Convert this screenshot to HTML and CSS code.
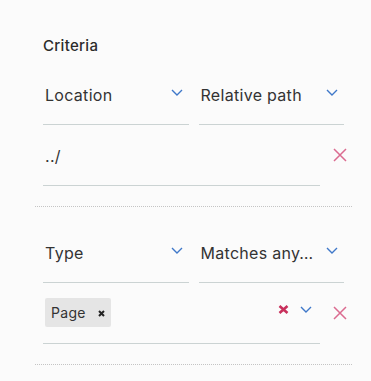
FILE: index.html
```html
<!DOCTYPE html>
<html>

<head>
    <link rel="stylesheet" href="styles.css">
    <title>Criteria</title>
</head>

<body>
    <div class="panel">
        <h3 class="title">Criteria</h3>

        <div class="group">
            <div class="selects">
                <div class="field select">
                    <span class="value">Location</span>
                    <svg class="chevron" width="12" height="7" viewBox="0 0 12 7"><polyline points="1,1 6,6 11,1" /></svg>
                </div>
                <div class="field select">
                    <span class="value">Relative path</span>
                    <svg class="chevron" width="12" height="7" viewBox="0 0 12 7"><polyline points="1,1 6,6 11,1" /></svg>
                </div>
            </div>
            <div class="inputrow">
                <div class="field input">
                    <span class="value">../</span>
                </div>
                <button class="remove">
                    <svg width="14" height="14" viewBox="0 0 14 14"><path d="M1 1 L13 13 M13 1 L1 13" /></svg>
                </button>
            </div>
        </div>

        <div class="group">
            <div class="selects">
                <div class="field select">
                    <span class="value">Type</span>
                    <svg class="chevron" width="12" height="7" viewBox="0 0 12 7"><polyline points="1,1 6,6 11,1" /></svg>
                </div>
                <div class="field select">
                    <span class="value">Matches any…</span>
                    <svg class="chevron" width="12" height="7" viewBox="0 0 12 7"><polyline points="1,1 6,6 11,1" /></svg>
                </div>
            </div>
            <div class="inputrow">
                <div class="field input multi">
                    <span class="chip">Page
                        <svg class="chip-x" width="7" height="7" viewBox="0 0 7 7"><path d="M1 1 L6 6 M6 1 L1 6" /></svg>
                    </span>
                    <span class="spacer"></span>
                    <svg class="clear" width="11" height="9" viewBox="0 0 11 9"><path d="M1.5 1 L9.5 8 M9.5 1 L1.5 8" /></svg>
                    <svg class="chevron" width="12" height="7" viewBox="0 0 12 7"><polyline points="1,1 6,6 11,1" /></svg>
                </div>
                <button class="remove">
                    <svg width="14" height="14" viewBox="0 0 14 14"><path d="M1 1 L13 13 M13 1 L1 13" /></svg>
                </button>
            </div>
        </div>
    </div>
</body>

</html>
```

FILE: styles.css
```css
body {
    margin: 0;
    background-color: #fbfbfb;
    font-family: Inter, "Noto Sans", sans-serif;
    color: #333333;
}

.panel {
    padding: 36px 19px 0 35px;
}

.title {
    margin: 0 0 8px 8px;
    font-size: 15px;
    font-weight: 500;
    line-height: 20px;
    letter-spacing: 0.3px;
    color: #2b2b2b;
}

.group {
    padding: 0 0 20px 8px;
    border-bottom: 1px dotted #c4c4c4;
}

.group + .group {
    padding-top: 15px;
}

.selects {
    display: flex;
    gap: 10px;
    margin-right: 8px;
}

.field {
    box-sizing: border-box;
    height: 61px;
    display: flex;
    align-items: flex-end;
    padding: 0 6px 17px 2px;
    border-bottom: 1px solid #cbd3d3;
    font-size: 16px;
    line-height: 24px;
    letter-spacing: 0.3px;
}

.select {
    flex: 1;
    min-width: 0;
}

.value {
    flex: 1;
    min-width: 0;
    white-space: nowrap;
}

.select .value {
    margin-right: 8px;
}

.chevron {
    flex: none;
    margin-bottom: 11px;
    fill: none;
    stroke: #3f78c9;
    stroke-width: 1.4;
}

.inputrow {
    display: flex;
    align-items: flex-end;
}

.input {
    flex: 1;
}

.remove {
    width: 24px;
    height: 14px;
    margin: 0 0 24px 8px;
    padding: 0;
    border: none;
    background: none;
    display: flex;
    justify-content: center;
}

.remove svg {
    fill: none;
    stroke: #db6b90;
    stroke-width: 1.5;
}

.multi {
    padding-left: 2px;
    padding-right: 8px;
}

.chip {
    flex: none;
    display: flex;
    align-items: center;
    gap: 12px;
    height: 29px;
    padding: 0 6px 0 6px;
    margin-bottom: -1px;
    background-color: #e5e5e5;
    border-radius: 2px;
    font-size: 14px;
    letter-spacing: 0.3px;
}

.chip-x {
    margin-top: 1px;
    fill: none;
    stroke: #222222;
    stroke-width: 2;
}

.spacer {
    flex: 1;
}

.clear {
    flex: none;
    margin: 0 11px 12px 0;
    fill: none;
    stroke: #c8305c;
    stroke-width: 2.6;
}

.multi .chevron {
    margin-bottom: 13px;
}
```
